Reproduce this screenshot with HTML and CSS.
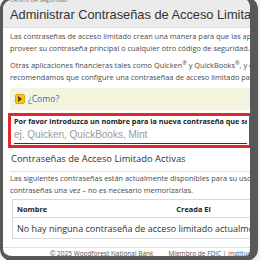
FILE: index.html
```html
<!DOCTYPE html>
<html lang="es">
<head>
    <meta charset="UTF-8">
    <meta name="viewport" content="width=device-width, initial-scale=1.0">
    <title>Administrar Contraseñas de Acceso Limitado</title>
    <link rel="stylesheet" href="styles.css">
</head>
<body>

    <div class="frame">
        <div class="header">
            <div class="crumb">Centro de Seguridad</div>
            <h1>Administrar Contraseñas de Acceso Limitado</h1>
        </div>

        <div class="content">
            <p>Las contraseñas de acceso limitado crean una manera para que las aplicaciones accedan a su cuenta sin<br>
               proveer su contraseña principal o cualquier otro código de seguridad.</p>
            <p>Otras aplicaciones financieras tales como Quicken<sup>®</sup> y QuickBooks<sup>®</sup>, y otras, pueden usarlas. Le<br>
               recomendamos que configure una contraseñaa de acceso limitado para cada una.</p>

            <div class="howto">
                <span class="toggle">
                    <svg width="4" height="6" viewBox="0 0 4 6"><path d="M0 0 L4 3 L0 6 Z" fill="#5a3d00"/></svg>
                </span>
                <a href="#">¿Como?</a>
            </div>

            <div class="newpass">
                <label for="passName">Por favor introduzca un nombre para la nueva contraseña que se va a crear</label>
                <input type="text" id="passName" placeholder="ej. Quicken, QuickBooks, Mint">
            </div>

            <h2>Contraseñas de Acceso Limitado Activas</h2>
            <p class="before-table">Las siguientes contraseñas están actualmente disponibles para su uso. Solo necesita ingresar estas<br>
               contraseñas una vez – no es necesario memorizarlas.</p>

            <table>
                <colgroup><col class="col-name"><col class="col-date"></colgroup>
                <thead>
                    <tr><th class="name">Nombre</th><th class="date">Creada El</th></tr>
                </thead>
                <tbody>
                    <tr><td colspan="2">No hay ninguna contraseña de acceso limitado actualmente.</td></tr>
                </tbody>
            </table>
        </div>

        <div class="footer">
            <a href="#">© 2025 Woodforest National Bank</a>
            <a href="#">Miembro de FDIC | Institución de Vivienda Equitativa</a>
        </div>
    </div>

</body>
</html>
```

FILE: styles.css
```css
html, body { margin: 0; padding: 0; }
body { background-color: #f2f2f2; font-family: "Open Sans", sans-serif; color: #4a4a4a; overflow: hidden; }
.frame { width: 247px; height: 256px; margin-top: -3px; border: solid #585858; border-width: 3px 8px 5px 3px; border-radius: 12px; background: white; overflow: hidden; }
.header { background-color: #ebebeb; border-bottom: 1px solid #dcdcdc; padding: 0 0 2px 7px; white-space: nowrap; }
.crumb { font-size: 6px; line-height: 6px; color: #777; margin-top: -3px; }
h1 { font-family: "Liberation Sans", Arial, sans-serif; font-weight: normal; font-size: 12.8px; line-height: 20px; margin: 2px 0 0; color: #333; }
.content { padding: 2px 0 0 7px; white-space: nowrap; }
p { font-size: 7.4px; line-height: 12px; margin: 0 0 5px; }
p.before-table { margin-bottom: 3px; }
sup { font-size: 5.5px; line-height: 0; }
.howto { background-color: #f4f4df; height: 22px; display: flex; align-items: center; gap: 3px; padding-left: 5px; margin-top: 4px; }
.toggle { width: 8px; height: 8px; background: #f7c320; border: 1px solid #dba600; border-radius: 2px; display: flex; align-items: center; justify-content: center; }
.howto a { color: #1a6fc4; font-size: 8.6px; text-decoration: none; }
.newpass { box-sizing: border-box; width: 244px; border: 3px solid #e2262b; margin: 3px 0 0 -2px; padding: 0 2px 1px 3px; }
.newpass label { display: block; font-weight: bold; font-size: 7.25px; line-height: 10px; color: #222; overflow: hidden; }
.newpass input { display: block; width: 100%; height: 13px; border: none; border-bottom: 1px solid #333; font-family: "Liberation Sans", Arial, sans-serif; font-size: 10px; line-height: 13px; padding: 2px 0; margin: 0; outline: none; background: transparent; }
.newpass input::placeholder { color: #9a9a9a; }
h2 { font-weight: normal; font-size: 9.4px; line-height: 16px; color: #333; margin: 3px 0 0; padding: 0 0 4px 1px; border-bottom: 1px solid #dfe5e0; }
table { border-collapse: collapse; table-layout: fixed; width: 251px; margin-left: 2px; }
.col-name { width: 111px; }
.col-date { width: 140px; }
th, td { border-top: 1px solid #d8d8d8; border-bottom: 1px solid #d8d8d8; padding: 0 4px; white-space: nowrap; overflow: hidden; }
th:first-child, td:first-child { border-left: 1px solid #d8d8d8; }
th { font-size: 7.4px; font-weight: bold; color: #222; height: 17px; }
th.name { text-align: left; }
th.date { text-align: center; }
td { font-size: 9px; color: #333; height: 20px; overflow: visible; }
.footer { border-top: 1px solid #dfdfdf; margin-top: 8px; padding: 1px 0 0 47px; display: flex; gap: 15px; white-space: nowrap; }
.footer a { font-size: 6.5px; line-height: 10px; color: #555; text-decoration: underline; }
```
